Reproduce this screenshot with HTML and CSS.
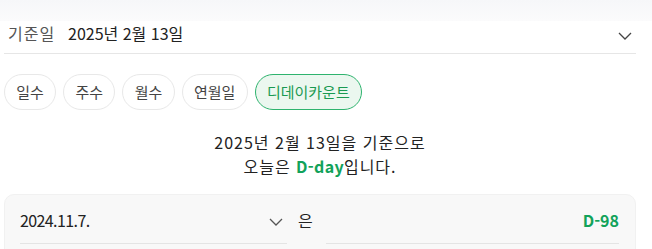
FILE: index.html
```html
<!DOCTYPE html>
<html lang="ko">
<head>
<meta charset="utf-8">
<link rel="stylesheet" href="styles.css">
</head>
<body>
<div class="topbar"></div>
<div class="wrap">
  <div class="base-row">
    <span class="base-label">기준일</span>
    <span class="base-value">2025년 2월 13일</span>
    <svg class="chev" width="14" height="8" viewBox="0 0 14 8"><path d="M1 1 L7 7 L13 1" fill="none" stroke="#444" stroke-width="1.3"/></svg>
  </div>
  <div class="pills">
    <button class="pill">일수</button>
    <button class="pill">주수</button>
    <button class="pill">월수</button>
    <button class="pill">연월일</button>
    <button class="pill active">디데이카운트</button>
  </div>
  <div class="summary">
    <div>2025년 2월 13일을 기준으로</div>
    <div>오늘은 <b class="green">D-day</b>입니다.</div>
  </div>
  <div class="card">
    <div class="card-row">
      <div class="field left">
        <span class="date">2024.11.7.</span>
        <svg class="chev small" width="14" height="8" viewBox="0 0 14 8"><path d="M1 1 L7 7 L13 1" fill="none" stroke="#555" stroke-width="1.3"/></svg>
      </div>
      <span class="eun">은</span>
      <div class="field right">
        <b class="green">D-98</b>
      </div>
    </div>
  </div>
</div>
</body>
</html>
```

FILE: styles.css
```css
* { box-sizing: border-box; }
html, body { margin: 0; padding: 0; background: #fff; }
body {
  font-family: "Malgun Gothic", "Noto Sans CJK KR", "Noto Sans", sans-serif;
  color: #222;
  width: 652px;
  height: 249px;
  overflow: hidden;
}
.topbar {
  height: 21px;
  background: linear-gradient(#f6f7f9, #fbfbfc);
}
.wrap {
  width: 632px;
  margin-left: 4px;
}
.base-row {
  display: flex;
  align-items: flex-start;
  height: 33px;
  border-bottom: 1px solid #e6e6e6;
  font-size: 16px;
  line-height: 24px;
  padding: 0 4px 0 4px;
}
.base-label { color: #555; letter-spacing: 1px; width: 60px; }
.base-value { color: #222; flex: 1; }
.chev { display: block; }
.base-row .chev { margin-top: 11px; }
.pills {
  display: flex;
  gap: 7px;
  margin-top: 20px;
}
.pill {
  font-family: inherit;
  height: 36px;
  padding: 0 11.3px;
  border: 1px solid #e8e8e8;
  border-radius: 18px;
  background: #fff;
  color: #444;
  font-size: 15px;
  line-height: 20px;
}
.pill.active {
  background: #ebf7ef;
  border-color: #2eb36e;
  color: #1a9a52;
}
.summary {
  margin-top: 20px;
  text-align: center;
  font-size: 16px;
  line-height: 24px;
  letter-spacing: 1px;
  color: #222;
}
.summary .green { letter-spacing: 0.3px; }
.green { color: #12a25a; font-weight: 700; }
.card {
  margin-top: 16px;
  background: #f8f8f8;
  border: 1px solid #f1f1f1;
  border-radius: 10px;
  padding: 13px 15px 0 15px;
  height: 80px;
}
.card-row {
  display: flex;
  align-items: flex-start;
  font-size: 16px;
  line-height: 24px;
}
.field {
  display: flex;
  align-items: flex-start;
  height: 36px;
  border-bottom: 1px solid #e4e4e4;
}
.field.left {
  width: 267px;
  justify-content: space-between;
  padding-right: 4px;
  color: #222;
}
.date { letter-spacing: -0.6px; }
.field.left .chev { margin-top: 10px; }
.field.right {
  flex: 1;
  justify-content: flex-end;
  margin-right: 1px;
}
.eun {
  width: 39px;
  padding-left: 11px;
}
```
